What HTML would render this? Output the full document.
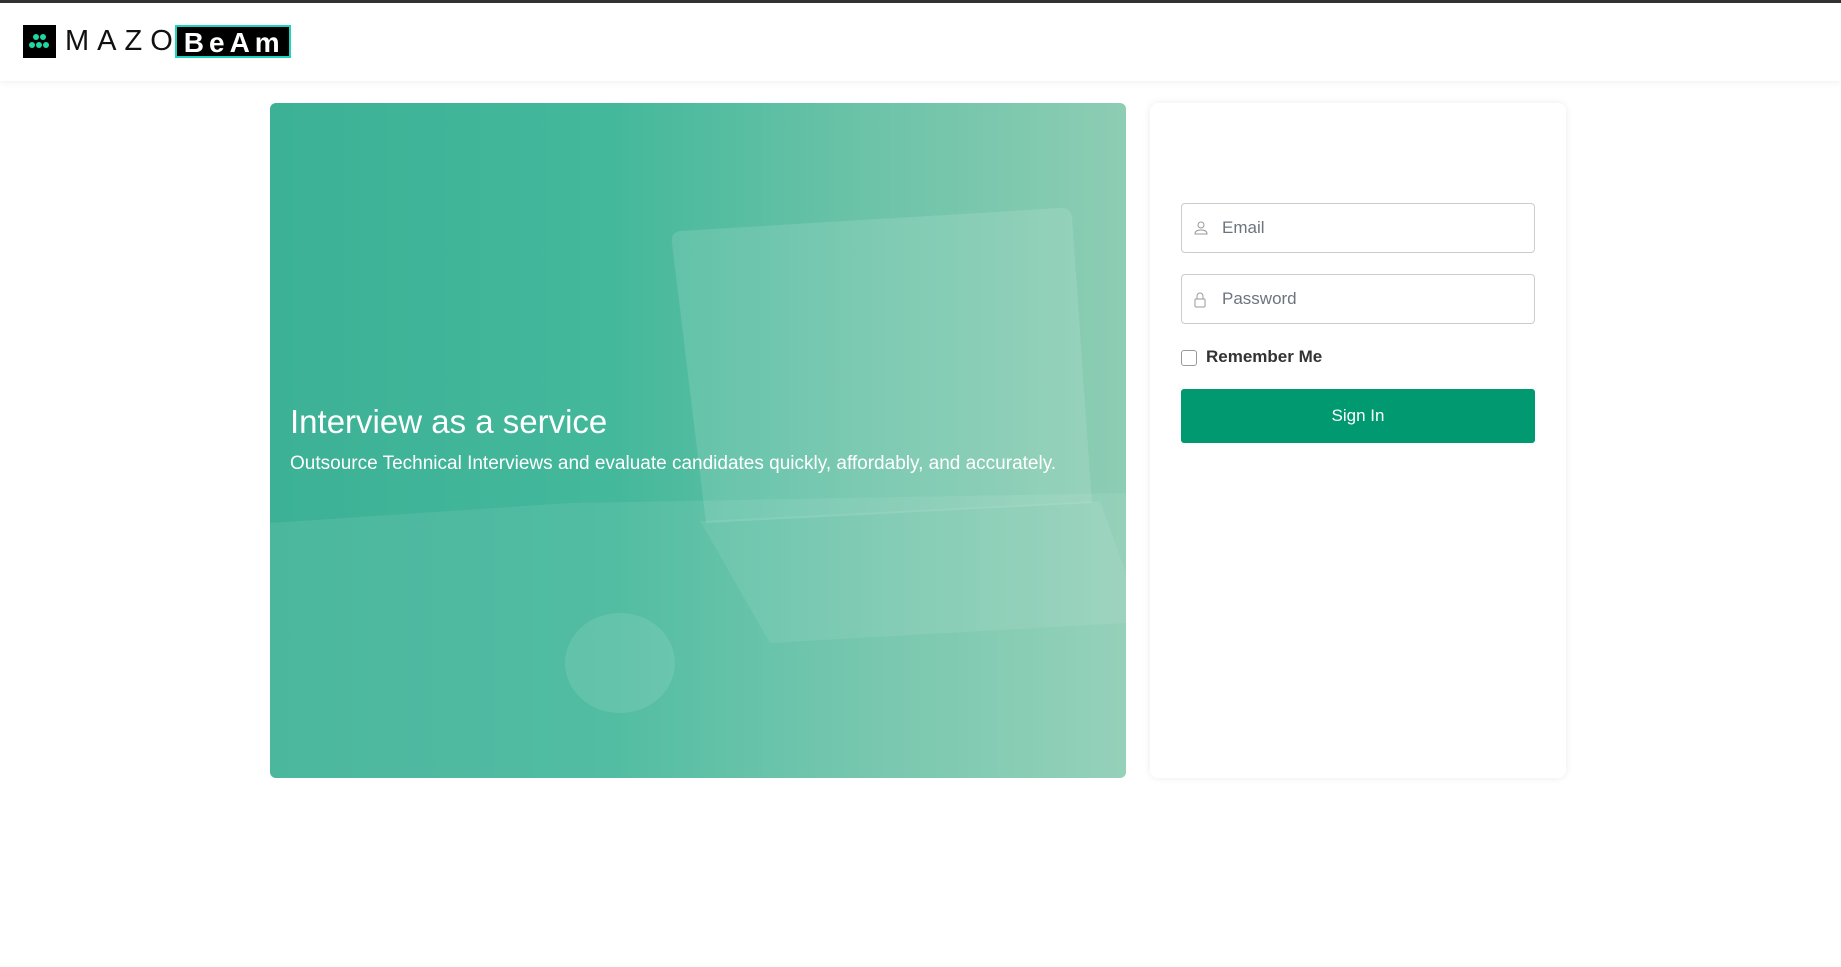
<!DOCTYPE html>
<html><head><meta charset="utf-8"><style>
*{box-sizing:border-box;margin:0;padding:0}
body{width:1841px;height:967px;background:#fff;font-family:"Liberation Sans",sans-serif;position:relative;overflow:hidden}
.top{position:absolute;left:0;top:0;width:1841px;height:3px;background:#333}
.hdr{position:absolute;left:0;top:3px;width:1841px;height:78px;background:#fff;box-shadow:0 2px 6px rgba(0,0,0,.05)}
.logo{position:absolute;left:23px;top:22px;height:33px;display:flex;align-items:center}
.lbox{width:33px;height:33px;background:#000;position:relative}
.lbox i{position:absolute;width:6px;height:6px;border-radius:50%;background:#1fd7a4}
.mazo{font-size:29px;letter-spacing:8px;margin-left:9px;color:#111;font-weight:400}
.beam{background:#000;color:#fff;font-size:28px;letter-spacing:5px;padding:0 4px 0 7px;height:33px;line-height:31px;border:2px solid #1ed4c0;margin-left:-6px;font-weight:bold}
.hero{position:absolute;left:270px;top:103px;width:856px;height:675px;border-radius:6px;overflow:hidden;background:linear-gradient(90deg,#3cb195 0%,#44b89b 40%,#6cc3a8 70%,#8dcdb4 100%)}
.hero h1{position:absolute;left:20px;top:300px;color:#fff;font-weight:400;font-size:33px}
.hero p{position:absolute;left:20px;top:350px;color:#fff;font-size:19px}
.card{position:absolute;left:1150px;top:103px;width:416px;height:675px;background:#fff;border-radius:8px;box-shadow:0 0 8px rgba(0,0,0,.08)}
.inp{position:absolute;left:31px;width:354px;height:50px;border:1px solid #ccc;border-radius:4px;color:#6c757d;font-size:17px;line-height:48px;padding-left:40px}
.inp svg{position:absolute;left:12px;top:17px}
.chk{position:absolute;left:31px;top:247px;width:16px;height:16px;border:1px solid #999;border-radius:3px}
.rem{position:absolute;left:56px;top:244px;font-size:17px;font-weight:bold;color:#333}
.btn{position:absolute;left:31px;top:286px;width:354px;height:54px;background:#009970;border-radius:3px;color:#fff;font-size:17px;text-align:center;line-height:54px}
</style></head><body>
<div class="top"></div>
<div class="hdr"><div class="logo"><div class="lbox"><i style="left:10px;top:9px"></i><i style="left:17px;top:9px"></i><i style="left:6px;top:17px"></i><i style="left:13px;top:17px"></i><i style="left:20px;top:17px"></i></div><span class="mazo">MAZO</span><span class="beam">BeAm</span></div></div>
<div class="hero">
<svg width="856" height="675" style="position:absolute;left:0;top:0">
<path d="M0 420 L300 400 L856 390 L856 675 L0 675Z" fill="#fff" opacity=".08"/>
<path d="M402 140 Q400 130 410 128 L790 105 Q800 104 802 114 L822 400 L436 420Z" fill="#fff" opacity=".12"/>
<path d="M430 418 L830 398 L856 470 L856 520 L500 540 Z" fill="#fff" opacity=".08"/>
<ellipse cx="350" cy="560" rx="55" ry="50" fill="#fff" opacity=".1"/>
</svg>
<h1>Interview as a service</h1><p>Outsource Technical Interviews and evaluate candidates quickly, affordably, and accurately.</p></div>
<div class="card">
<div class="inp" style="top:100px"><svg width="14" height="14" viewBox="0 0 14 14" fill="none" stroke="#999"><circle cx="7" cy="4" r="3"/><path d="M1 13c0-3 3-4 6-4s6 1 6 4z"/></svg>Email</div>
<div class="inp" style="top:171px"><svg width="12" height="16" viewBox="0 0 12 16" fill="none" stroke="#999"><path d="M3 7V4a3 3 0 0 1 6 0v3"/><rect x="1" y="7" width="10" height="8" rx="1"/></svg>Password</div>
<div class="chk"></div><div class="rem">Remember Me</div>
<div class="btn">Sign In</div>
</div>
</body></html>
